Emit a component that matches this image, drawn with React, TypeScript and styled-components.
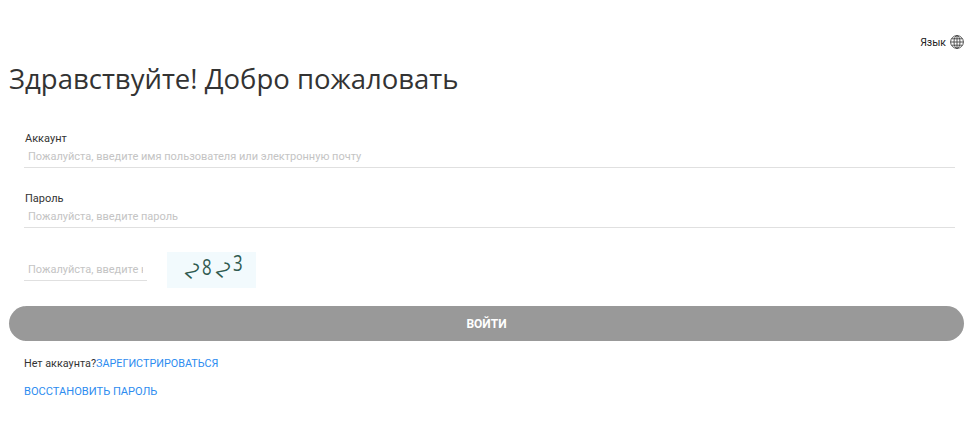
import React from "react";
import styled, { createGlobalStyle } from "styled-components";

const Global = createGlobalStyle`
  html, body { margin: 0; padding: 0; background: #fff; }
  body { font-family: Roboto, "Open Sans", "Liberation Sans", sans-serif; color: #333; }
`;

const Page = styled.div`
  width: 973px;
  height: 425px;
  padding: 34px 9px 0;
  box-sizing: border-box;
  overflow: hidden;
`;

const LangBar = styled.div`
  display: flex;
  justify-content: flex-end;
  align-items: center;
  gap: 4px;
  height: 16px;
  font-size: 10.5px;
  color: #222;
`;

const Title = styled.h1`
  margin: 7px 0 0;
  font-family: "Open Sans", sans-serif;
  font-size: 27.5px;
  line-height: 44px;
  font-weight: 400;
  color: #333;
`;

const Form = styled.div`
  padding: 0 9px 0 15px;
  margin-top: 29px;
  display: flex;
  flex-direction: column;
`;

const Field = styled.div`
  display: flex;
  flex-direction: column;
  height: 60px;
`;

const Label = styled.div`
  padding-left: 1px;
  font-size: 11px;
  line-height: 18px;
  height: 18px;
  color: #333;
`;

const Input = styled.input`
  display: block;
  box-sizing: border-box;
  width: 100%;
  height: 20px;
  padding: 0 4px 2px;
  border: 0;
  border-bottom: 1px solid #e0e0e0;
  outline: none;
  background: transparent;
  font: inherit;
  font-size: 11px;
  &::placeholder { color: #c4c4c4; opacity: 1; }
`;

const CaptchaRow = styled.div`
  display: flex;
  align-items: flex-start;
  gap: 20px;
  height: 36px;
  margin-top: 2px;
`;

const CaptchaInput = styled(Input)`
  width: 123px;
  margin-top: 9px;
`;

const CaptchaImage = styled.svg`
  display: block;
  width: 89px;
  height: 36px;
  background: #f2fafd;
`;

const Submit = styled.button`
  display: block;
  width: 100%;
  height: 35px;
  margin-top: 18px;
  border: 0;
  border-radius: 18px;
  background: #999;
  color: #fff;
  font: inherit;
  font-size: 12px;
  font-weight: 700;
`;

const Footer = styled.div`
  padding-left: 15px;
  font-size: 10.8px;
  line-height: 18px;
  color: #333;
`;

const FooterLine = styled.div`
  margin-top: ${(p: { $top: number }) => p.$top}px;
`;

const RestoreLink = styled.a`
  color: #2d8cf0;
  text-decoration: none;
  font-size: 11.1px;
`;

const Link = styled.a`
  color: #2d8cf0;
  text-decoration: none;
`;

const Globe = () => (
  <svg width="14" height="14" viewBox="0 0 14 14" fill="none" stroke="#444" strokeWidth="0.9">
    <circle cx="7" cy="7" r="6.4" />
    <ellipse cx="7" cy="7" rx="3" ry="6.4" />
    <path d="M7 .6v12.8M.6 7h12.8M1.6 3.8h10.8M1.6 10.2h10.8" />
  </svg>
);

const Digit = styled.text`
  font-family: "Open Sans", sans-serif;
  font-size: 21px;
  fill: #2f5a50;
`;

export default function App() {
  return (
    <Page>
      <Global />
      <LangBar>
        Язык
        <Globe />
      </LangBar>
      <Title>Здравствуйте! Добро пожаловать</Title>
      <Form>
        <Field>
          <Label>Аккаунт</Label>
          <Input placeholder="Пожалуйста, введите имя пользователя или электронную почту" />
        </Field>
        <Field>
          <Label>Пароль</Label>
          <Input placeholder="Пожалуйста, введите пароль" />
        </Field>
        <CaptchaRow>
          <CaptchaInput placeholder="Пожалуйста, введите код" />
          <CaptchaImage viewBox="0 0 89 36">
            <Digit transform="translate(17 21) rotate(40) scale(.85 1)">2</Digit>
            <Digit transform="translate(35 23) scale(.8 1)">8</Digit>
            <Digit transform="translate(48 20) rotate(40) scale(.85 1)">2</Digit>
            <Digit transform="translate(66 19) scale(.8 1)">3</Digit>
          </CaptchaImage>
        </CaptchaRow>
      </Form>
      <Submit>ВОЙТИ</Submit>
      <Footer>
        <FooterLine $top={14}>
          Нет аккаунта?<Link href="#">ЗАРЕГИСТРИРОВАТЬСЯ</Link>
        </FooterLine>
        <FooterLine $top={10}>
          <RestoreLink href="#">ВОССТАНОВИТЬ ПАРОЛЬ</RestoreLink>
        </FooterLine>
      </Footer>
    </Page>
  );
}
